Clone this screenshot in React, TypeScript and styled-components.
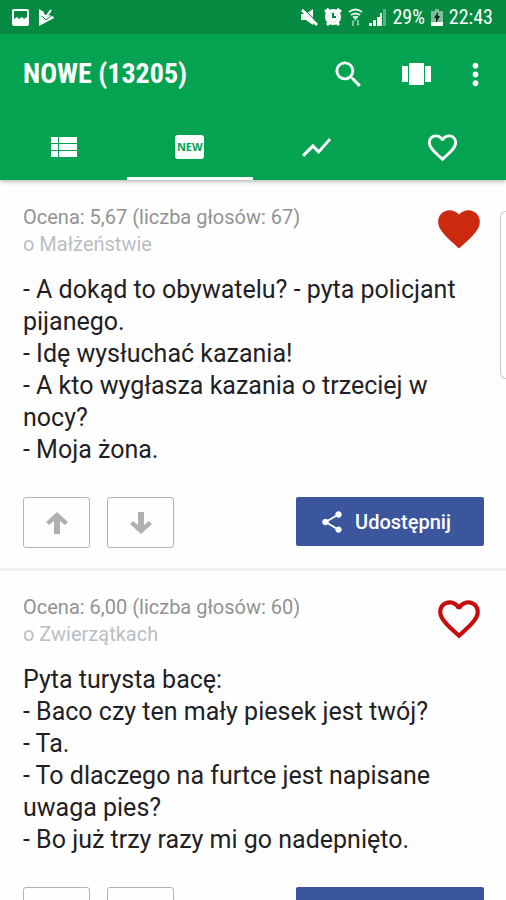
import React from "react";
import styled, { createGlobalStyle, css } from "styled-components";
import {
  MdFavorite,
  MdFavoriteBorder,
  MdMoreVert,
  MdSearch,
  MdShare,
  MdShowChart,
} from "react-icons/md";

const GlobalStyle = createGlobalStyle`
  *, *::before, *::after { box-sizing: border-box; }
  body {
    margin: 0;
    background: #fefefe;
    color: #1f2124;
    font-family: Roboto, "Liberation Sans", sans-serif;
  }
  button { font: inherit; color: inherit; border: 0; padding: 0; margin: 0; background: none; cursor: pointer; }
  svg { display: block; flex: none; }
`;

const Screen = styled.div`
  position: relative;
  display: flex;
  flex-direction: column;
  height: 100vh;
`;

const Header = styled.header`
  position: relative;
  flex: none;
  background: #04a351;
  color: #fff;
  box-shadow: 0 1px 5px rgba(0, 0, 0, 0.35);
`;

const StatusBar = styled.div`
  display: flex;
  align-items: center;
  justify-content: space-between;
  height: 34px;
  padding: 0 13px 0 12px;
  background: #058a42;
  font-family: "Roboto Condensed", Roboto, sans-serif;
  font-size: 20px;
`;

const StatusGroup = styled.div<{ $gap: number }>`
  display: flex;
  align-items: center;
  gap: ${({ $gap }) => $gap}px;
`;

const Toolbar = styled.div`
  display: flex;
  align-items: center;
  height: 80px;
  padding: 0 13px 0 23px;
`;

const Title = styled.h1`
  flex: 1;
  margin: 0;
  font-family: "Roboto Condensed", Roboto, sans-serif;
  font-size: 28px;
  font-weight: 700;
  line-height: 36px;
`;

const Actions = styled.div`
  display: flex;
  align-items: center;
  gap: 24px;
`;

const IconButton = styled.button<{ $wide?: boolean }>`
  display: flex;
  font-size: 35px;
  ${({ $wide }) => $wide && css`margin-right: 9px;`}
`;

const Tabs = styled.nav`
  display: grid;
  grid-template-columns: repeat(4, 1fr);
  height: 66px;
`;

const Tab = styled.button<{ $active?: boolean }>`
  display: flex;
  align-items: center;
  justify-content: center;
  font-size: 35px;
  box-shadow: ${({ $active }) => ($active ? "inset 0 -3px #fff" : "none")};
`;

const NewBadge = styled.span`
  width: 29px;
  border-radius: 3px;
  background: #fff;
  color: #04a351;
  font-family: "Open Sans", sans-serif;
  font-size: 11px;
  font-weight: 700;
  line-height: 24px;
`;

const Feed = styled.main`
  flex: 1;
  min-height: 0;
  padding-top: 1px;
  overflow-y: auto;
  scrollbar-width: none;
`;

const Card = styled.article`
  padding: 23px 22px 20px 23px;
  border-bottom: 3px solid #f2f2f2;
`;

const CardHead = styled.div`
  display: flex;
  justify-content: space-between;
  height: 54px;
  margin-bottom: 16px;
  font-size: 20px;
  line-height: 27px;
`;

const Rating = styled.div`
  color: #929292;
`;

const Category = styled.div`
  color: #b9bfc4;
`;

const Favourite = styled.button<{ $on: boolean }>`
  display: flex;
  align-items: flex-start;
  font-size: 50px;
  color: ${({ $on }) => ($on ? "#cb2a10" : "#c80c0c")};
`;

const Joke = styled.p`
  margin: 0 0 31px;
  font-size: 25px;
  line-height: 32px;
  white-space: pre-line;
`;

const CardActions = styled.div`
  display: flex;
  align-items: flex-start;
  gap: 17px;
`;

const VoteButton = styled.button`
  display: flex;
  align-items: center;
  justify-content: center;
  width: 67px;
  height: 51px;
  border: 1px solid #b4b4b4;
  border-radius: 3px;
  color: #b0b0b0;
`;

const ShareButton = styled.button`
  display: flex;
  align-items: center;
  justify-content: center;
  gap: 10px;
  width: 188px;
  height: 49px;
  margin-left: auto;
  padding-right: 10px;
  border-radius: 2px;
  background: #3b569d;
  color: #fff;
  font-size: 20px;
  font-weight: 500;
`;

const EdgeHandle = styled.div`
  position: absolute;
  top: 211px;
  right: 0;
  width: 6px;
  height: 168px;
  border: 1px solid #c9c9c9;
  border-right: 0;
  border-radius: 6px 0 0 6px;
  background: #fefefe;
`;

const PictureIcon = () => (
  <svg width="17" height="17" viewBox="0 0 17 17">
    <path
      fill="#fff"
      fillRule="evenodd"
      d="M2 0h13a2 2 0 0 1 2 2v13a2 2 0 0 1-2 2H2a2 2 0 0 1-2-2V2a2 2 0 0 1 2-2zm0 2v8l3-2 2 2 3-2 2 2 3-2V2z"
    />
  </svg>
);

const PlayCheckIcon = () => (
  <svg width="15" height="17" viewBox="0 0 15 17">
    <path fill="#fff" d="M0 0 5 3v4l2 2 3-3 5 2v1L0 17z" />
    <path fill="none" stroke="#058a42" strokeWidth="1" d="M3 7l4 4 6-5" />
    <path fill="none" stroke="#fff" strokeWidth="2" d="M4 5l3 3 5-7" />
  </svg>
);

const MuteIcon = () => (
  <svg width="17" height="17" viewBox="0 0 17 17">
    <path fill="#fff" d="M0 5h5l7-5v16l-7-5H0z" />
    <path stroke="#058a42" strokeWidth="1" d="M3 0l14 14" />
    <path stroke="#fff" strokeWidth="3" d="M1 1l15 15" />
  </svg>
);

const AlarmIcon = () => (
  <svg width="18" height="18" viewBox="0 0 18 18">
    <circle cx="9" cy="9" r="8" fill="#fff" />
    <path stroke="#fff" strokeWidth="3" d="M1 4l4-3M17 4l-4-3M3 17l3-3M15 17l-3-3" />
    <circle cx="9" cy="9" r="5" fill="none" stroke="#d3ebdd" />
    <path fill="none" stroke="#058a42" strokeWidth="2" d="M9 5v4h3" />
  </svg>
);

const WifiIcon = () => (
  <svg width="15" height="18" viewBox="0 0 15 18">
    <g fill="none" stroke="#e8f6ee" strokeWidth="2">
      <path d="M1 4q6.500-5 13 0" />
      <path d="M3 7q4.500-3 9 0" />
      <path d="M5 9.500q2.500-1.500 5 0" />
    </g>
    <path fill="#e8f6ee" d="M6 10h3l-1.500 3z" />
    <path fill="#82c49e" d="M3 14l2-2 2 2H6v4H4v-4zM8 16h1v-4h2v4h1l-2 2z" />
  </svg>
);

const SignalIcon = () => (
  <svg width="17" height="17" viewBox="0 0 17 17">
    <path fill="#fff" d="M0 14h3v3H0zM4 11h3v6H4zM8 8h3v9H8z" />
    <path fill="#e0f2e8" d="M11 4h2v13h-2z" />
    <path fill="#5bb07f" d="M14 0h3v17h-3z" />
  </svg>
);

const BatteryIcon = () => (
  <svg width="12" height="17" viewBox="0 0 12 17">
    <path fill="#7fbd98" d="M4 0h4v2h4v11H0V2h4z" />
    <path fill="#fff" d="M0 13h12v4H0z" />
    <path fill="#10241a" d="M7 3 3 9h2v5l4-7H7z" />
  </svg>
);

const CarouselIcon = () => (
  <svg width="35" height="35" viewBox="0 0 35 35">
    <path fill="#fff" d="M3 9h6v16H3zM10 6h15v22H10zM26 9h6v16h-6z" />
  </svg>
);

const ListIcon = () => (
  <svg width="35" height="35" viewBox="0 0 35 35">
    <path
      fill="#fff"
      d="M5 7h7v6H5zM13 7h18v6H13zM5 14h7v6H5zM13 14h18v6H13zM5 21h7v6H5zM13 21h18v6H13z"
    />
  </svg>
);

const ArrowIcon = ({ down }: { down?: boolean }) => (
  <svg width="22" height="22" viewBox="0 0 22 22">
    <path
      fill="currentColor"
      transform={down ? "rotate(180 11 11)" : undefined}
      d="M11 0 22 10 19 13 14 9V22H8V9L3 13 0 10z"
    />
  </svg>
);

interface JokeEntry {
  score: string;
  votes: number;
  category: string;
  text: string;
  favourite: boolean;
}

const jokes: JokeEntry[] = [
  {
    score: "5,67",
    votes: 67,
    category: "o Małżeństwie",
    text: "- A dokąd to obywatelu? - pyta policjant pijanego.\n- Idę wysłuchać kazania!\n- A kto wygłasza kazania o trzeciej w nocy?\n- Moja żona.",
    favourite: true,
  },
  {
    score: "6,00",
    votes: 60,
    category: "o Zwierzątkach",
    text: "Pyta turysta bacę:\n- Baco czy ten mały piesek jest twój?\n- Ta.\n- To dlaczego na furtce jest napisane uwaga pies?\n- Bo już trzy razy mi go nadepnięto.",
    favourite: false,
  },
];

const JokeCard = ({ joke }: { joke: JokeEntry }) => (
  <Card>
    <CardHead>
      <div>
        <Rating>{`Ocena: ${joke.score} (liczba głosów: ${joke.votes})`}</Rating>
        <Category>{joke.category}</Category>
      </div>
      <Favourite $on={joke.favourite} aria-label="Ulubione" aria-pressed={joke.favourite}>
        {joke.favourite ? <MdFavorite /> : <MdFavoriteBorder />}
      </Favourite>
    </CardHead>
    <Joke>{joke.text}</Joke>
    <CardActions>
      <VoteButton aria-label="Głosuj za">
        <ArrowIcon />
      </VoteButton>
      <VoteButton aria-label="Głosuj przeciw">
        <ArrowIcon down />
      </VoteButton>
      <ShareButton>
        <MdShare size={26} />
        Udostępnij
      </ShareButton>
    </CardActions>
  </Card>
);

export default function App() {
  return (
    <Screen>
      <GlobalStyle />
      <Header>
        <StatusBar>
          <StatusGroup $gap={10}>
            <PictureIcon />
            <PlayCheckIcon />
          </StatusGroup>
          <StatusGroup $gap={6}>
            <MuteIcon />
            <AlarmIcon />
            <WifiIcon />
            <SignalIcon />
            <span>29%</span>
            <BatteryIcon />
            <span>22:43</span>
          </StatusGroup>
        </StatusBar>
        <Toolbar>
          <Title>NOWE (13205)</Title>
          <Actions>
            <IconButton $wide aria-label="Szukaj">
              <MdSearch />
            </IconButton>
            <IconButton aria-label="Widok karuzeli">
              <CarouselIcon />
            </IconButton>
            <IconButton aria-label="Więcej">
              <MdMoreVert />
            </IconButton>
          </Actions>
        </Toolbar>
        <Tabs>
          <Tab aria-label="Lista">
            <ListIcon />
          </Tab>
          <Tab $active>
            <NewBadge>NEW</NewBadge>
          </Tab>
          <Tab aria-label="Popularne">
            <MdShowChart />
          </Tab>
          <Tab aria-label="Ulubione">
            <MdFavoriteBorder />
          </Tab>
        </Tabs>
      </Header>
      <Feed>
        {jokes.map((joke) => (
          <JokeCard key={joke.category} joke={joke} />
        ))}
      </Feed>
      <EdgeHandle />
    </Screen>
  );
}
